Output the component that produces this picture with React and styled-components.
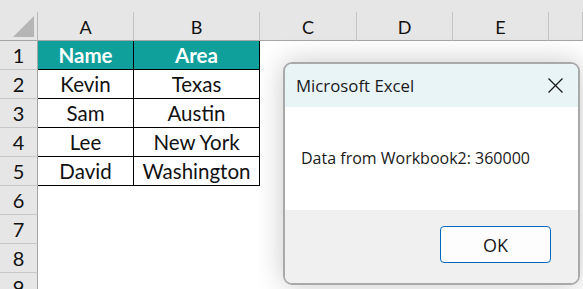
import React from 'react';
import styled, { createGlobalStyle } from 'styled-components';

const Global = createGlobalStyle`
  html, body { margin: 0; padding: 0; background: #ffffff; }
  body { width: 583px; height: 289px; overflow: hidden; }
`;

const Sheet = styled.div`
  position: relative;
  width: 583px;
  height: 289px;
  overflow: hidden;
  background: #ffffff;
  font-family: Lato, "Liberation Sans", sans-serif;
`;

const TopStrip = styled.div`
  height: 12px;
  background: #e6e6e6;
`;

const Grid = styled.div`
  display: grid;
  grid-template-columns: 38px 96px 126px 97px 96px 96px 1fr;
  grid-auto-rows: 29px;
`;

const Corner = styled.div`
  background: #e6e6e6;
  border-right: 1px solid #b8b8b8;
  border-bottom: 1px solid #a6a6a6;
  box-sizing: border-box;
  display: flex;
  align-items: flex-end;
  justify-content: flex-end;
  padding: 0 3px 3px 0;
`;

const ColHead = styled.div`
  background: #e6e6e6;
  border-right: 1px solid #c4c4c4;
  border-bottom: 1px solid #a6a6a6;
  box-sizing: border-box;
  display: flex;
  align-items: center;
  justify-content: center;
  font-size: 18px;
  color: #111;
  padding-top: 1px;
`;

const RowHead = styled.div`
  background: #e6e6e6;
  border-right: 1px solid #a6a6a6;
  border-bottom: 1px solid #c8c8c8;
  box-sizing: border-box;
  display: flex;
  align-items: center;
  justify-content: center;
  font-size: 20px;
  color: #111;
`;

const Cell = styled.div`
  box-sizing: border-box;
  display: flex;
  align-items: center;
  justify-content: center;
  font-size: 20.5px;
  color: #111;
  background: ${(p) => (p.$head ? '#10a09c' : '#ffffff')};
  font-weight: ${(p) => (p.$head ? 700 : 400)};
  ${(p) => p.$head && 'color: #ffffff;'}
  border-right: 1px solid ${(p) => (p.$table ? '#000' : '#fff')};
  border-bottom: 1px solid ${(p) => (p.$table ? '#000' : '#fff')};
`;

const Dialog = styled.div`
  position: absolute;
  left: 283px;
  top: 62px;
  width: 297px;
  height: 223px;
  box-sizing: border-box;
  border: 2px solid #a9a9a9;
  border-radius: 9px;
  overflow: hidden;
  display: flex;
  flex-direction: column;
  box-shadow: 0 0 28px rgba(0, 0, 0, 0.22);
  font-family: "Open Sans", "Noto Sans", sans-serif;
  color: #1a1a1a;
`;

const TitleBar = styled.div`
  height: 43px;
  background: #e9f4f7;
  display: flex;
  align-items: center;
  justify-content: space-between;
  padding: 0 15px 0 11px;
  font-size: 16.8px;
`;

const Body = styled.div`
  height: 103px;
  background: #ffffff;
  display: flex;
  align-items: center;
  padding-left: 16px;
  padding-bottom: 2px;
  box-sizing: border-box;
  font-size: 16px;
`;

const Footer = styled.div`
  flex: 1;
  background: #f0f0f0;
  display: flex;
  justify-content: flex-end;
  align-items: flex-start;
  padding: 16px 27px 0 0;
`;

const Button = styled.div`
  width: 111px;
  height: 37px;
  box-sizing: border-box;
  border: 1px solid #0067c0;
  border-radius: 4px;
  background: #fdfdfd;
  display: flex;
  align-items: center;
  justify-content: center;
  font-size: 18px;
`;

const cols = ['A', 'B', 'C', 'D', 'E', ''];
const data = [
  ['Name', 'Area'],
  ['Kevin', 'Texas'],
  ['Sam', 'Austin'],
  ['Lee', 'New York'],
  ['David', 'Washington'],
];

export default function App() {
  const rows = [];
  for (let r = 1; r <= 9; r++) {
    const vals = data[r - 1] || [];
    rows.push(<RowHead key={`h${r}`}>{r}</RowHead>);
    for (let c = 0; c < 6; c++) {
      const inTable = r <= 5 && c < 2;
      rows.push(
        <Cell key={`${r}-${c}`} $table={inTable} $head={inTable && r === 1}>
          {inTable ? vals[c] : ''}
        </Cell>
      );
    }
  }
  return (
    <Sheet>
      <Global />
      <TopStrip />
      <Grid>
        <Corner>
          <svg width="21" height="21" viewBox="0 0 21 21">
            <polygon points="0,21 21,0 21,21" fill="#b5b5b5" />
          </svg>
        </Corner>
        {cols.map((c, i) => (
          <ColHead key={i}>{c}</ColHead>
        ))}
        {rows}
      </Grid>
      <Dialog>
        <TitleBar>
          <span>Microsoft Excel</span>
          <svg width="15" height="15" viewBox="0 0 15 15">
            <path d="M0.5 0.5 L14.5 14.5 M14.5 0.5 L0.5 14.5" stroke="#1a1a1a" strokeWidth="1.3" />
          </svg>
        </TitleBar>
        <Body>Data from Workbook2: 360000</Body>
        <Footer>
          <Button>OK</Button>
        </Footer>
      </Dialog>
    </Sheet>
  );
}
